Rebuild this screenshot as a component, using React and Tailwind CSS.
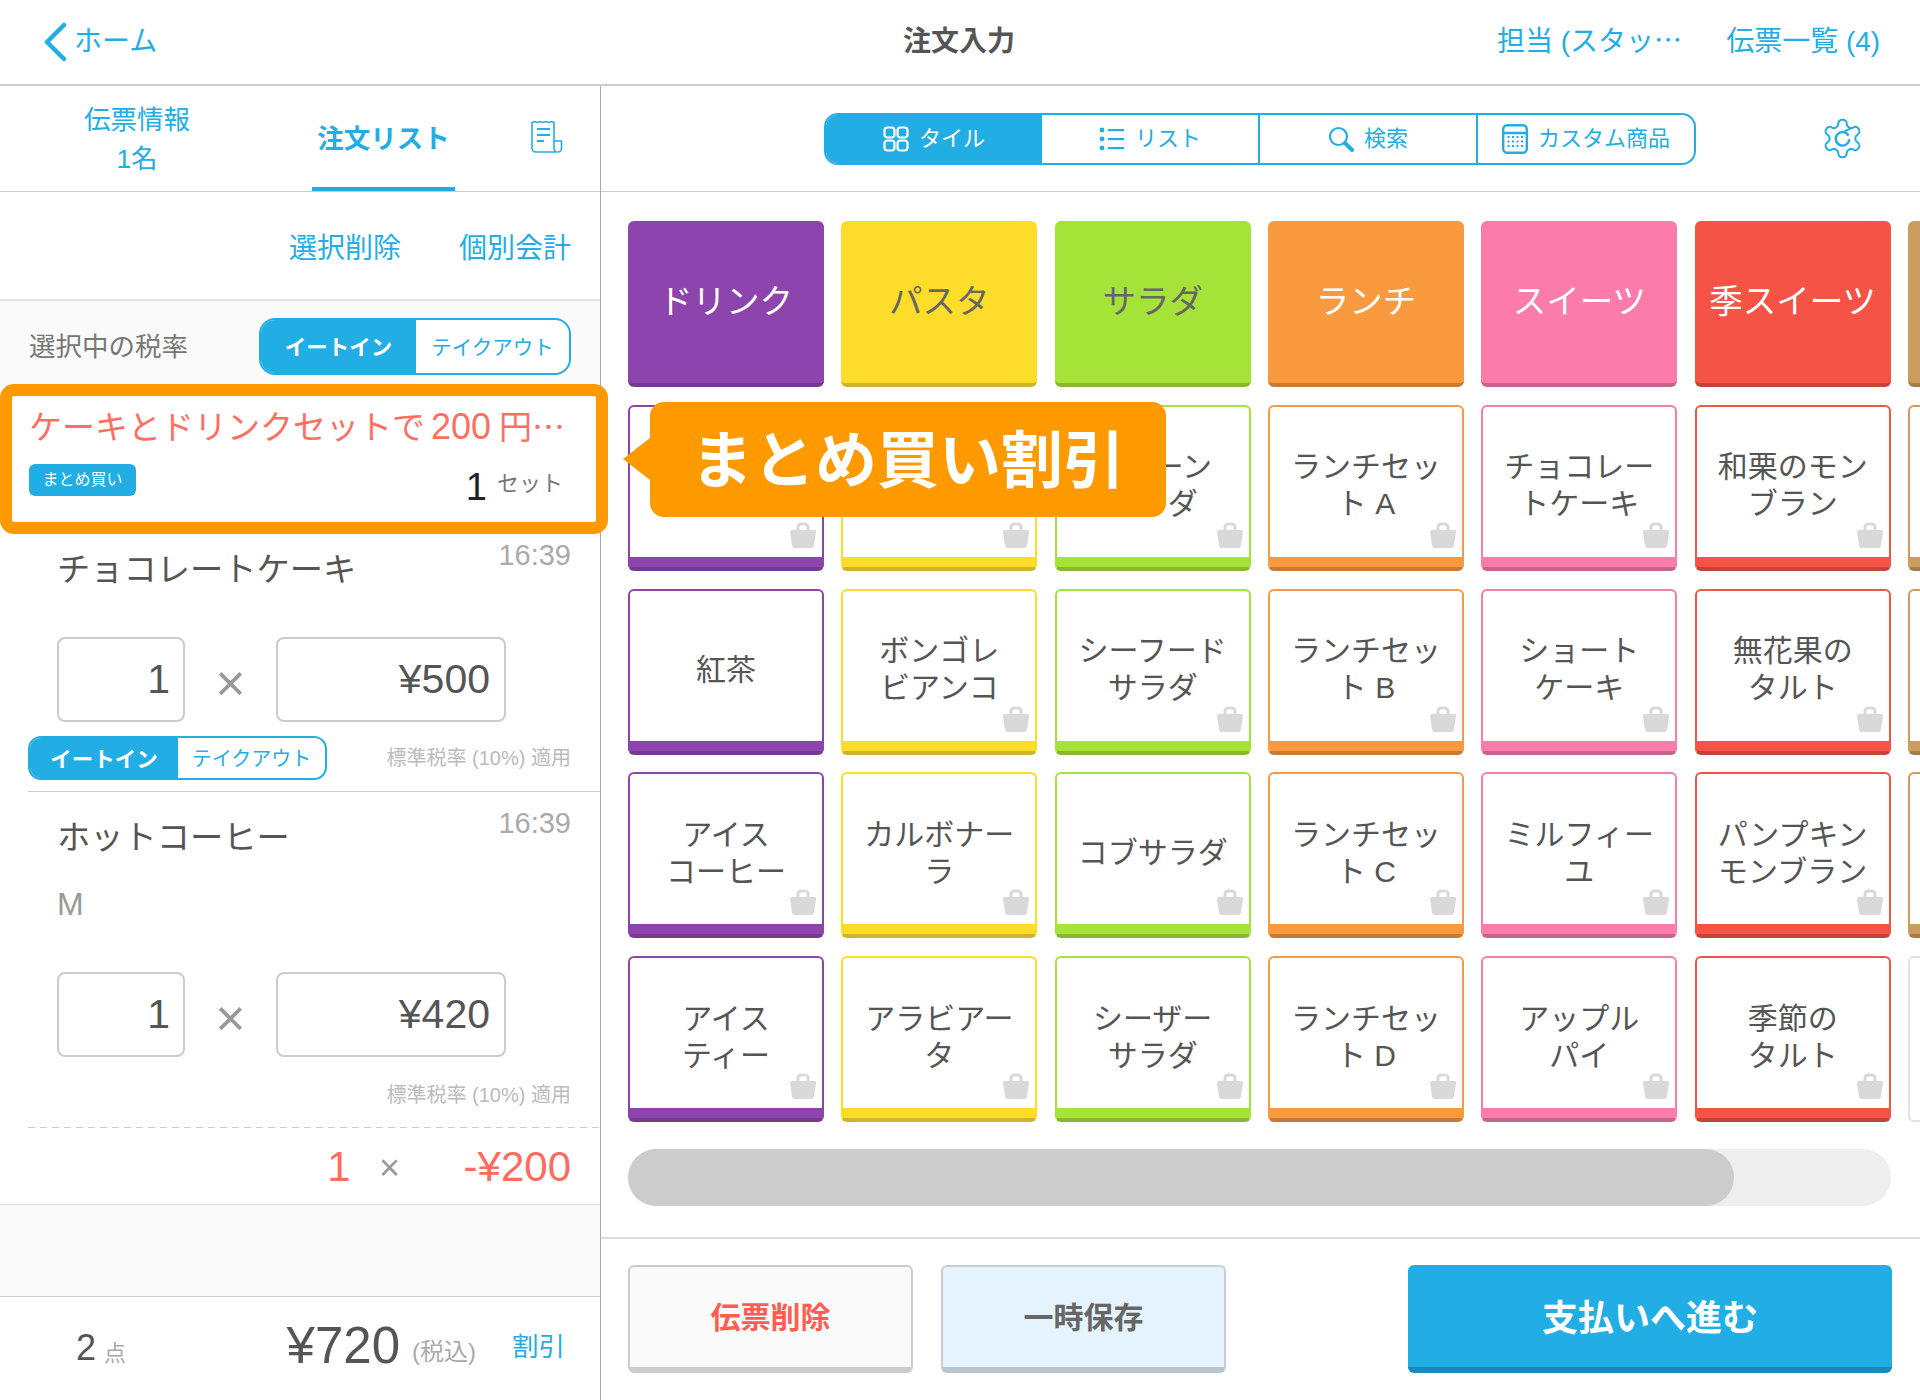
const COLUMNS = [
  { cat: 'ドリンク', bg: 'bg-[#8e44ad]', border: 'border-[#8e44ad]', dark: 'border-b-[#753a8e]', items: ['ホット\nコーヒー', '紅茶', 'アイス\nコーヒー', 'アイス\nティー'], catText: 'text-white' },
  { cat: 'パスタ', bg: 'bg-[#fddc2a]', border: 'border-[#fddc2a]', dark: 'border-b-[#cfb32b]', items: ['ペペロン\nチーノ', 'ボンゴレ\nビアンコ', 'カルボナー\nラ', 'アラビアー\nタ'], catText: 'text-[#666666]' },
  { cat: 'サラダ', bg: 'bg-[#a6e338]', border: 'border-[#a6e338]', dark: 'border-b-[#8ab732]', items: ['グリーン\nサラダ', 'シーフード\nサラダ', 'コブサラダ', 'シーザー\nサラダ'], catText: 'text-[#666666]' },
  { cat: 'ランチ', bg: 'bg-[#f99a3f]', border: 'border-[#f99a3f]', dark: 'border-b-[#c67c38]', items: ['ランチセッ\nト A', 'ランチセッ\nト B', 'ランチセッ\nト C', 'ランチセッ\nト D'], catText: 'text-white' },
  { cat: 'スイーツ', bg: 'bg-[#fb7bab]', border: 'border-[#fb7bab]', dark: 'border-b-[#c7648a]', items: ['チョコレー\nトケーキ', 'ショート\nケーキ', 'ミルフィー\nユ', 'アップル\nパイ'], catText: 'text-white' },
  { cat: '季スイーツ', bg: 'bg-[#f55346]', border: 'border-[#f55346]', dark: 'border-b-[#c4443a]', items: ['和栗のモン\nブラン', '無花果の\nタルト', 'パンプキン\nモンブラン', '季節の\nタルト'], catText: 'text-white' },
];

const NO_BAG = ['紅茶'];

const BagIcon = () => (
  <svg viewBox="0 0 28 27" className="absolute right-[5px] bottom-[9px] w-[28px] h-[27px]">
    <path d="M9 10V6a3 3 0 0 1 3-3h4a3 3 0 0 1 3 3v4" fill="none" stroke="#d9d9d9" strokeWidth="3" />
    <path d="M3 9h22a2 2 0 0 1 2 2.3l-2 13a3 3 0 0 1-3 2.7H6a3 3 0 0 1-3-2.7l-2-13A2 2 0 0 1 3 9z" fill="#d9d9d9" />
  </svg>
);

const CategoryTile = ({ col }) => (
  <div className={`w-[196px] h-[166px] rounded-[6px] border-b-[4px] flex items-center justify-center text-[33.5px] ${col.bg} ${col.dark} ${col.catText}`}>
    {col.cat}
  </div>
);

const ItemTile = ({ col, label }) => (
  <div className={`w-[196px] h-[166px] rounded-[6px] border-2 border-b-[4px] flex flex-col bg-white ${col.border} ${col.dark}`}>
    <div className="relative flex-1 flex items-center justify-center pt-[7px] text-center text-[30px] leading-[37px] text-[#555555] whitespace-pre-line">
      {label}
      {!NO_BAG.includes(label) && <BagIcon />}
    </div>
    <div className={`h-[10px] ${col.bg}`} />
  </div>
);

const TaxToggle = ({ big }) => (
  <div className={`flex overflow-hidden border-2 border-[#22aee5] bg-white font-['Noto_Sans_CJK_JP',sans-serif] ${big ? 'w-[312px] h-[57px] rounded-[16px] text-[20.5px]' : 'w-[299px] h-[44px] rounded-[13px] text-[20px]'}`}>
    <div className={`flex items-center justify-center bg-[#22aee5] text-white font-bold text-[21.5px] ${big ? 'w-[155px]' : 'w-[148px]'}`}>イートイン</div>
    <div className="flex-1 flex items-center justify-center text-[#22aee5]">テイクアウト</div>
  </div>
);

const QtyPrice = ({ price }) => (
  <div className="flex items-center pl-[57px] h-[85px]">
    <div className="w-[128px] h-full rounded-[8px] border-2 border-[#cccccc] flex items-center justify-end pr-[13px] text-[41px] text-[#555555]">1</div>
    <div className="w-[91px] text-center text-[52px] leading-none text-[#999999] pt-[6px]">×</div>
    <div className="w-[230px] h-full rounded-[8px] border-2 border-[#cccccc] flex items-center justify-end pr-[14px] text-[41px] text-[#555555]">{price}</div>
  </div>
);

const RateNote = () => <span className="text-[20px] text-[#bbbbbb]">標準税率 (10%) 適用</span>;

const GridIcon = () => (
  <svg viewBox="0 0 26 26" className="w-[26px] h-[26px]" fill="none" stroke="#fff" strokeWidth="2.2">
    <rect x="1.5" y="1.5" width="10" height="10" rx="3" />
    <rect x="14.5" y="1.5" width="10" height="10" rx="3" />
    <rect x="1.5" y="14.5" width="10" height="10" rx="3" />
    <rect x="14.5" y="14.5" width="10" height="10" rx="3" />
  </svg>
);

const ListIcon = () => (
  <svg viewBox="0 0 26 26" className="w-[26px] h-[26px]" fill="#22aee5">
    <circle cx="3" cy="4" r="2.4" />
    <circle cx="3" cy="13" r="2.4" />
    <circle cx="3" cy="22" r="2.4" />
    <rect x="9" y="3" width="16" height="2.2" />
    <rect x="9" y="12" width="16" height="2.2" />
    <rect x="9" y="21" width="16" height="2.2" />
  </svg>
);

const SearchIcon = () => (
  <svg viewBox="0 0 26 26" className="w-[26px] h-[26px]" fill="none" stroke="#22aee5">
    <circle cx="10.5" cy="10.5" r="8.5" strokeWidth="2.2" />
    <path d="M17 17l7 7" strokeWidth="4" strokeLinecap="round" />
  </svg>
);

const CalcIcon = () => (
  <svg viewBox="0 0 26 30" className="w-[26px] h-[30px]" fill="none" stroke="#22aee5">
    <rect x="1.2" y="1.2" width="23.6" height="27.6" rx="4" strokeWidth="2.4" />
    <path d="M1.2 9h23.6" strokeWidth="2.4" />
    <g fill="#22aee5" stroke="none">
      {[13, 17.5, 22].flatMap((y) =>
        [6.5, 11, 15.5, 20].map((x) => <rect key={`${x}-${y}`} x={x - 1} y={y - 1} width="2" height="2" />)
      )}
    </g>
  </svg>
);

const GearIcon = () => (
  <svg viewBox="0 0 24 24" className="w-[45px] h-[45px]" fill="none" stroke="#22aee5" strokeWidth="1.1" strokeLinejoin="round">
    <path d="M12.22 2h-.44a2 2 0 0 0-2 2v.18a2 2 0 0 1-1 1.73l-.43.25a2 2 0 0 1-2 0l-.15-.08a2 2 0 0 0-2.73.73l-.22.38a2 2 0 0 0 .73 2.73l.15.1a2 2 0 0 1 1 1.72v.51a2 2 0 0 1-1 1.74l-.15.09a2 2 0 0 0-.73 2.73l.22.38a2 2 0 0 0 2.73.73l.15-.08a2 2 0 0 1 2 0l.43.25a2 2 0 0 1 1 1.73V20a2 2 0 0 0 2 2h.44a2 2 0 0 0 2-2v-.18a2 2 0 0 1 1-1.73l.43-.25a2 2 0 0 1 2 0l.15.08a2 2 0 0 0 2.73-.73l.22-.39a2 2 0 0 0-.73-2.73l-.15-.08a2 2 0 0 1-1-1.74v-.5a2 2 0 0 1 1-1.74l.15-.09a2 2 0 0 0 .73-2.73l-.22-.38a2 2 0 0 0-2.73-.73l-.15.08a2 2 0 0 1-2 0l-.43-.25a2 2 0 0 1-1-1.73V4a2 2 0 0 0-2-2z" />
    <path d="M15.2 10.5A3.6 3.6 0 1 0 15.6 12.4" strokeWidth="1.3" />
    <path d="M13 8.2l3.5-1.6" strokeWidth="1.1" />
  </svg>
);

const ReceiptIcon = () => (
  <svg viewBox="0 0 36 34" className="w-[36px] h-[34px]" fill="none" stroke="#22aee5" strokeWidth="1.6">
    <path d="M2 2.5l2.75-1 2.75 1 2.75-1 2.75 1 2.75-1 2.75 1 2.75-1 2.75 1v26a3.5 3.5 0 0 0 3.5 3.5H6a4 4 0 0 1-4-4z" />
    <path d="M28 32a3.5 3.5 0 0 0 3.5-3.500V21h-7" />
    <path d="M7 9h13M7 15h13M7 21h7" strokeWidth="2" />
  </svg>
);

const BackIcon = () => (
  <svg viewBox="0 0 24 40" className="w-[24px] h-[40px]" fill="none" stroke="#22aee5" strokeWidth="4.5" strokeLinecap="round" strokeLinejoin="round">
    <path d="M21 3L4 20l17 17" />
  </svg>
);

const SEGMENTS = [
  { label: 'タイル', Icon: GridIcon, active: true },
  { label: 'リスト', Icon: ListIcon },
  { label: '検索', Icon: SearchIcon },
  { label: 'カスタム商品', Icon: CalcIcon },
];

const LeftPanel = () => (
  <div className="w-[601px] shrink-0 border-r border-[#aaaaaa] flex flex-col">
    {/* Tabs */}
    <div className="h-[106px] border-b border-[#cccccc] flex text-[#22aee5]">
      <div className="w-[274px] text-center text-[26.5px] leading-[39px] pt-[15px]">
        伝票情報
        <br />
        1名
      </div>
      <div className="w-[143px] ml-[38px] border-b-[4px] border-[#22aee5] flex items-center justify-center text-[26.5px] font-bold pt-[6px]">
        注文リスト
      </div>
      <div className="flex-1 pl-[75px] pt-[34px]">
        <ReceiptIcon />
      </div>
    </div>
    {/* Actions */}
    <div className="h-[109px] border-b-2 border-[#e5e5e5] flex items-center justify-end gap-[58px] pr-[29px] pt-[7px] text-[28px] text-[#22aee5]">
      <span>選択削除</span>
      <span>個別会計</span>
    </div>
    {/* Tax rate */}
    <div className="h-[83px] bg-[#fafafa] flex items-center justify-between pl-[29px] pr-[29px] pt-[7px]">
      <span className="mt-[4px] text-[26.5px] text-[#777777]">選択中の税率</span>
      <TaxToggle big />
    </div>
    {/* Bulk discount row */}
    <div className="relative z-10 w-[608px] h-[150px] shrink-0 rounded-[14px] border-[12px] border-[#ff9900] bg-white pl-[17px] pr-[30px] pt-[7px]">
      <div className="flex items-baseline text-[33px] leading-[44px] text-[#ff6f61] whitespace-nowrap">
        ケーキとドリンクセットで<span className="ml-[6px] text-[36px]">200</span><span className="ml-[8px]">円</span>
        <span className="font-['Noto_Sans_CJK_JP',sans-serif]">…</span>
      </div>
      <div className="flex items-start justify-between mt-[14px]">
        <span className="w-[107px] h-[32px] rounded-[6px] bg-[#22aee5] text-white text-[16px] flex items-center justify-center">まとめ買い</span>
        <div className="flex items-center gap-[10px] pt-[3px] pr-[3px]">
          <span className="text-[38px] leading-[40px] text-[#222222]">1</span>
          <span className="text-[22px] leading-[30px] -mt-[6px] text-[#777777]">セット</span>
        </div>
      </div>
    </div>
    {/* Chocolate cake */}
    <div className="h-[258px] ml-[28px] border-b border-[#cccccc]">
      <div className="h-[103px] flex justify-between items-start pl-[29px] pr-[29px]">
        <span className="mt-[16px] text-[33.25px] leading-[40px] text-[#555555]">チョコレートケーキ</span>
        <span className="mt-[5px] text-[29px] leading-[32px] text-[#aaaaaa]">16:39</span>
      </div>
      <div className="-ml-[28px]">
        <QtyPrice price="¥500" />
      </div>
      <div className="flex items-center justify-between pr-[29px] mt-[14px]">
        <TaxToggle />
        <RateNote />
      </div>
    </div>
    {/* Hot coffee */}
    <div className="h-[336px] ml-[28px] flex flex-col">
      <div className="h-[180px] flex justify-between items-start pl-[29px] pr-[29px]">
        <div>
          <div className="mt-[26px] text-[33.25px] leading-[40px] text-[#555555]">ホットコーヒー</div>
          <div className="mt-[26px] text-[32px] leading-[40px] text-[#999999]">M</div>
        </div>
        <span className="mt-[15px] text-[29px] leading-[32px] text-[#aaaaaa]">16:39</span>
      </div>
      <div className="-ml-[28px]">
        <QtyPrice price="¥420" />
      </div>
      <div className="flex justify-end pr-[29px] mt-[23px]">
        <RateNote />
      </div>
      <div className="mt-auto h-px bg-[repeating-linear-gradient(90deg,#cccccc_0,#cccccc_7px,transparent_7px,transparent_12px)]" />
    </div>
    {/* Discount total */}
    <div className="h-[77px] border-b border-[#dddddd] flex items-center justify-end pr-[29px] text-[42px] text-[#ff6b5e]">
      <span>1</span>
      <span className="ml-[9px] w-[60px] text-center text-[36px] text-[#999999] pt-[4px]">×</span>
      <span className="ml-[44px]">-¥200</span>
    </div>
    <div className="h-[92px] bg-[#fafafa] border-b border-[#cccccc]" />
    {/* Footer */}
    <div className="flex-1 flex items-center pl-[76px] pr-[35px] pb-[1px]">
      <span className="text-[36px] text-[#555555]">2</span>
      <span className="ml-[8px] mt-[10px] text-[22px] text-[#aaaaaa]">点</span>
      <span className="ml-auto pb-[3px] text-[51px] text-[#555555]">¥720</span>
      <span className="ml-[12px] mt-[8px] text-[24px] text-[#aaaaaa]">(税込)</span>
      <span className="ml-[36px] text-[26.5px] text-[#22aee5]">割引</span>
    </div>
  </div>
);

const RightPanel = () => (
  <div className="flex-1 min-w-0 flex flex-col overflow-hidden">
    {/* View switcher */}
    <div className="h-[106px] border-b border-[#cccccc] flex items-center pl-[223px]">
      <div className="w-[872px] h-[52px] rounded-[14px] border-2 border-[#22aee5] overflow-hidden flex">
        {SEGMENTS.map(({ label, Icon, active }, i) => (
          <div
            key={label}
            className={`flex-1 flex items-center justify-center gap-[10px] text-[22px] ${active ? 'bg-[#22aee5] text-white' : 'text-[#22aee5]'} ${i > 0 && i < 3 ? 'border-r-2 border-[#22aee5]' : ''}`}
          >
            <Icon />
            <span>{label}</span>
          </div>
        ))}
      </div>
      <div className="ml-[124px]">
        <GearIcon />
      </div>
    </div>
    {/* Tile grid */}
    <div className="h-[1045px] shrink-0 pl-[27px] pt-[29px] overflow-hidden">
      <div className="flex gap-x-[17.33px]">
        {COLUMNS.map((col) => (
          <div key={col.cat} className="w-[196px] shrink-0 flex flex-col gap-y-[17.75px]">
            <CategoryTile col={col} />
            {col.items.map((label) => (
              <ItemTile key={label} col={col} label={label} />
            ))}
          </div>
        ))}
        <div className="w-[196px] shrink-0 flex flex-col gap-y-[17.75px]">
          <div className="h-[166px] rounded-[6px] bg-[#cb9c5f] border-b-[4px] border-b-[#a37d4c]" />
          {[0, 1, 2].map((n) => (
            <div key={n} className="h-[166px] rounded-[6px] border-2 border-[#cb9c5f] border-b-[4px] border-b-[#a37d4c] flex flex-col justify-end">
              <div className="h-[10px] bg-[#cb9c5f]" />
            </div>
          ))}
          <div className="h-[166px] rounded-[6px] border-2 border-[#e2e2e2]" />
        </div>
      </div>
      {/* Scrollbar */}
      <div className="mt-[27px] w-[1263px] h-[57px] rounded-full bg-[#eeeeee]">
        <div className="w-[1106px] h-full rounded-full bg-[#cccccc]" />
      </div>
    </div>
    {/* Bottom actions */}
    <div className="flex-1 border-t-2 border-[#dddddd] flex items-start pl-[27px] pt-[26px] text-[30px] font-bold">
      <button className="w-[285px] h-[108px] rounded-[6px] bg-[#fafafa] border-2 border-b-[6px] border-[#cccccc] text-[#ff5d50]">伝票削除</button>
      <button className="ml-[28px] w-[285px] h-[108px] rounded-[6px] bg-[#e4f3fd] border-2 border-b-[6px] border-[#c5ced6] border-b-[#b8c6d2] text-[#666666]">一時保存</button>
      <button className="ml-[182px] w-[484px] h-[108px] pt-[6px] rounded-[6px] bg-[#22aee5] border-b-[6px] border-[#1a8ab8] text-white text-[36px]">支払いへ進む</button>
    </div>
  </div>
);

export default function App() {
  return (
    <div className="relative w-[1920px] h-[1400px] overflow-hidden bg-white font-['Liberation_Sans','Noto_Sans_CJK_JP',sans-serif]">
      {/* Header */}
      <div className="h-[86px] border-b-2 border-[#cccccc] flex items-center text-[28px] text-[#22aee5]">
        <div className="w-[650px] flex items-center pl-[43px] gap-[7px]">
          <BackIcon />
          <span>ホーム</span>
        </div>
        <div className="w-[618px] text-center font-bold text-[#555555]">注文入力</div>
        <span className="ml-[229px] pb-[3px] whitespace-nowrap">
          担当 (スタッ<span className="font-['Noto_Sans_CJK_JP',sans-serif]">…</span>
        </span>
        <span className="ml-[44px] whitespace-nowrap">伝票一覧 (4)</span>
      </div>

      <div className="flex h-[1314px]">
        <LeftPanel />
        <RightPanel />
      </div>

      {/* Callout */}
      <div className="absolute left-[650px] top-[402px] w-[516px] h-[115px] rounded-[14px] bg-[#ff9900] flex items-center justify-center pb-[7px] text-[62px] font-bold text-white font-['Noto_Sans_CJK_JP',sans-serif]">
        まとめ買い割引
        <div className="absolute -left-[27px] top-[36px] w-0 h-0 border-y-[21px] border-y-transparent border-r-[27px] border-r-[#ff9900]" />
      </div>
    </div>
  );
}
